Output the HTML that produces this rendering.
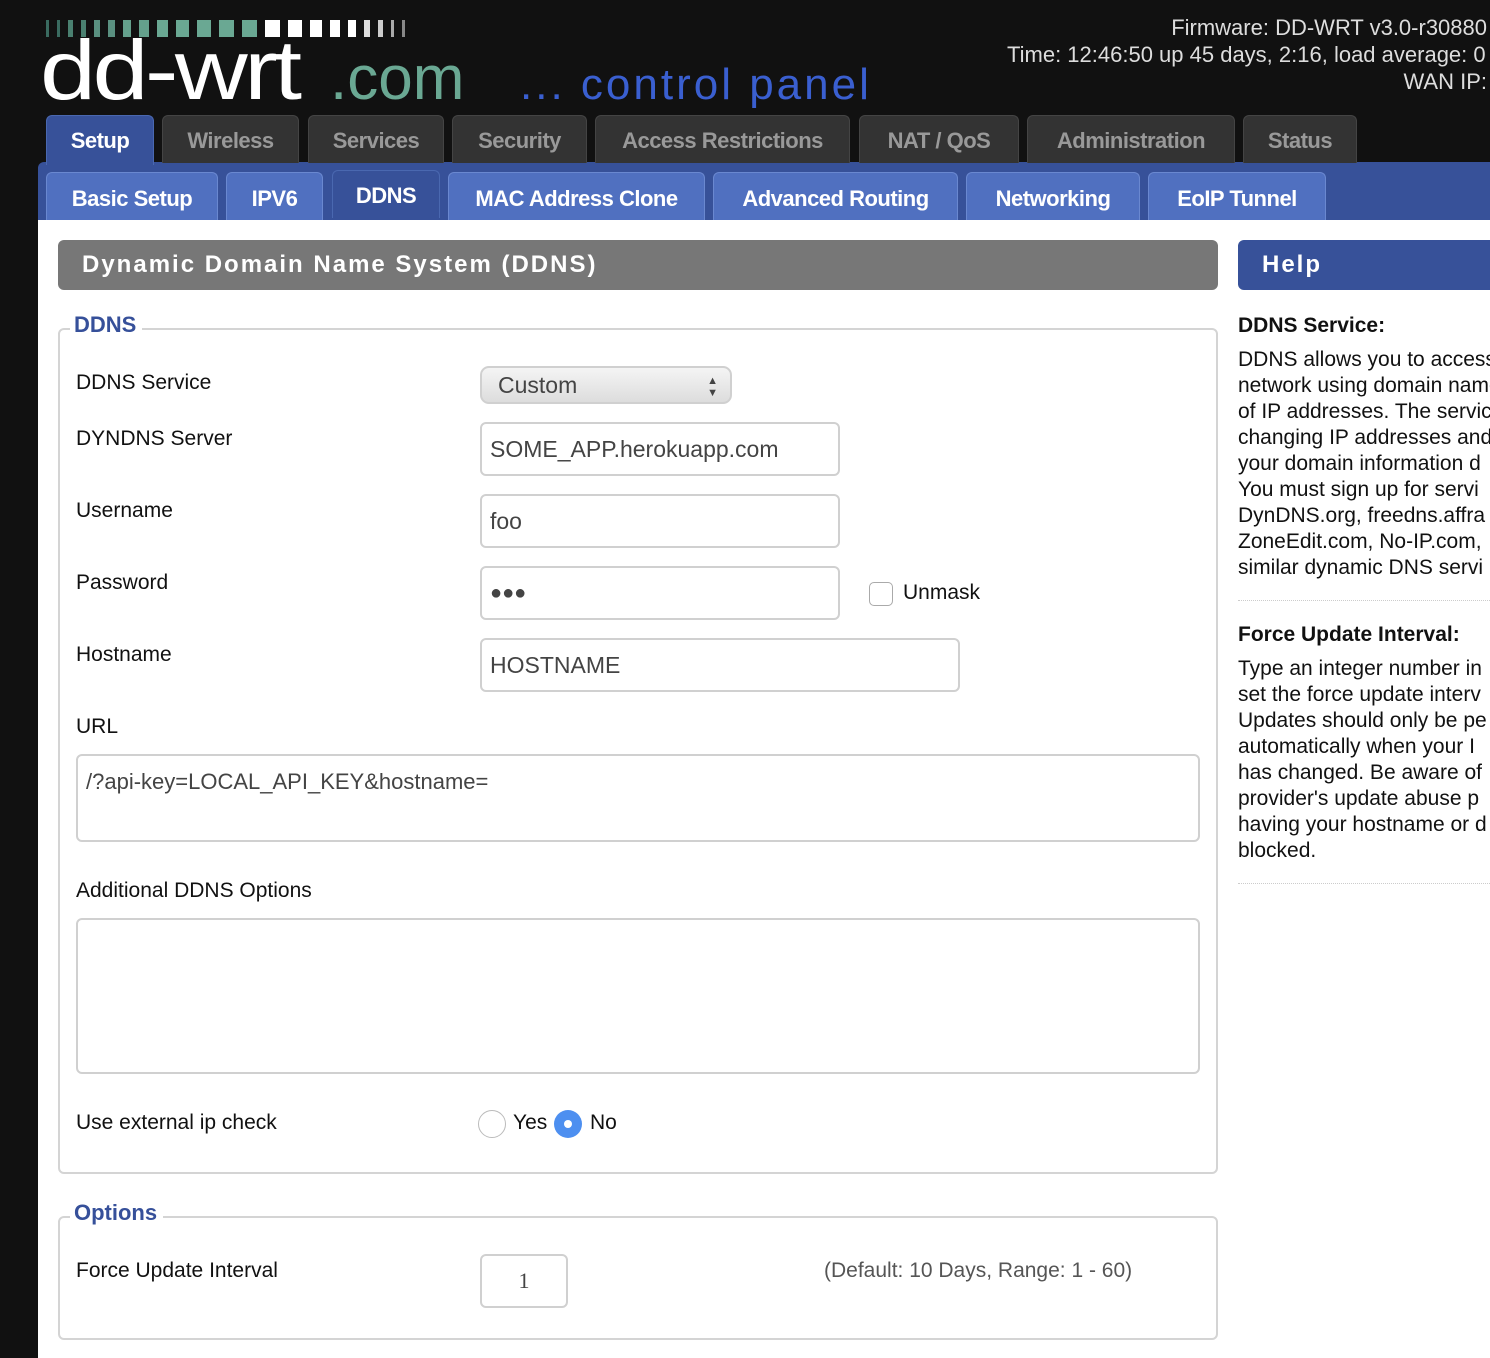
<!DOCTYPE html>
<html><head><meta charset="utf-8"><style>
*{box-sizing:border-box;margin:0;padding:0}
html,body{width:1490px;height:1358px;overflow:hidden;background:#111;font-family:"Liberation Sans",sans-serif}
.a{position:absolute;white-space:nowrap}
.tab{position:absolute;top:115px;height:48px;background:#333;border:1px solid #444;border-bottom:none;border-radius:6px 6px 0 0;color:#999;font-weight:bold;font-size:22px;text-align:center;line-height:50px;letter-spacing:-0.5px}
.sub{position:absolute;top:172px;height:48px;background:#5070c0;border:1px solid #6a88d0;border-bottom:none;border-radius:6px 6px 0 0;color:#fff;font-weight:bold;font-size:22px;text-align:center;line-height:52px;letter-spacing:-0.5px}
.lbl{position:absolute;font-size:21px;color:#111;white-space:nowrap}
.inp{position:absolute;border:2px solid #d0d0d0;border-radius:6px;background:#fff;font-size:23px;color:#444;padding-left:8px;line-height:50px}
.fs{position:absolute;border:2px solid #d4d4d4;border-radius:6px}
.leg{position:absolute;background:#fff;color:#36509a;font-weight:bold;font-size:22px;padding:0 6px 0 4px}
.help{position:absolute;left:1238px;font-size:21px;color:#111;line-height:26px;white-space:nowrap}
.bars span{display:block}
</style></head><body>
<div class="a bars" style="left:46px;top:20px;height:17px;display:flex;gap:8px">
<span style="width:3px;background:#3a6b60"></span><span style="width:3px;background:#3a6b60"></span><span style="width:5px;background:#4a8070"></span><span style="width:5px;background:#4a8070"></span><span style="width:6px;background:#5a9080"></span><span style="width:7px;background:#5a9080"></span><span style="width:8px;background:#64a08c"></span><span style="width:10px;background:#64a08c"></span><span style="width:11px;background:#6aa893"></span><span style="width:13px;background:#6aa893"></span><span style="width:14px;background:#6aa893"></span><span style="width:15px;background:#6aa893"></span><span style="width:15px;background:#6aa893"></span><span style="width:15px;background:#fff"></span><span style="width:14px;background:#fff"></span><span style="width:12px;background:#fff"></span><span style="width:10px;background:#fff"></span><span style="width:8px;background:#fff"></span><span style="width:6px;background:#ddd"></span><span style="width:5px;background:#ccc"></span><span style="width:3px;background:#aaa"></span><span style="width:3px;background:#888"></span>
</div>
<div class="a" style="left:40px;top:28px;font-size:84px;color:#fff;line-height:84px"><span style="display:inline-block;transform:scaleX(1.2);transform-origin:left;letter-spacing:-3px;width:290px">dd-wrt</span><span style="color:#6aa893;font-size:62px">.com</span></div>
<div class="a" style="left:520px;top:60px;font-size:44px;color:#3a5fd0;letter-spacing:3px">... control panel</div>
<div class="a" style="right:3px;top:14px;color:#ddd;font-size:22px;line-height:27px">Firmware: DD-WRT v3.0-r30880</div>
<div class="a" style="left:1007px;top:41px;color:#ddd;font-size:22px;line-height:27px">Time: 12:46:50 up 45 days, 2:16, load average: 0</div>
<div class="a" style="right:3px;top:68px;color:#ddd;font-size:22px;line-height:27px">WAN IP:</div>

<div class="a" style="left:38px;top:162px;width:1452px;height:58px;background:#375199;border-radius:6px 0 0 0"></div>
<div class="tab" style="left:46px;width:108px;background:#375199;border-color:#4a68b0;color:#fff;height:50px;top:115px">Setup</div>
<div class="tab" style="left:162px;width:137px">Wireless</div>
<div class="tab" style="left:308px;width:136px">Services</div>
<div class="tab" style="left:452px;width:135px">Security</div>
<div class="tab" style="left:595px;width:255px">Access Restrictions</div>
<div class="tab" style="left:859px;width:160px">NAT / QoS</div>
<div class="tab" style="left:1027px;width:208px">Administration</div>
<div class="tab" style="left:1243px;width:114px">Status</div>

<div class="sub" style="left:46px;width:172px">Basic Setup</div>
<div class="sub" style="left:226px;width:97px">IPV6</div>
<div class="sub" style="left:332px;width:108px;background:#375199;border-color:#4a68b0;top:170px;line-height:50px">DDNS</div>
<div class="sub" style="left:448px;width:257px">MAC Address Clone</div>
<div class="sub" style="left:713px;width:245px">Advanced Routing</div>
<div class="sub" style="left:966px;width:174px">Networking</div>
<div class="sub" style="left:1148px;width:178px">EoIP Tunnel</div>

<div class="a" style="left:38px;top:220px;width:1452px;height:1138px;background:#fff"></div>
<div class="a" style="left:58px;top:240px;width:1160px;height:50px;background:#777;border-radius:6px;color:#fff;font-weight:bold;font-size:24px;line-height:50px;padding-left:24px;letter-spacing:2px">Dynamic Domain Name System (DDNS)</div>
<div class="a" style="left:1238px;top:240px;width:260px;height:50px;background:#375199;border-radius:6px 0 0 6px;color:#fff;font-weight:bold;font-size:24px;line-height:50px;padding-left:24px;letter-spacing:2px">Help</div>

<div class="fs" style="left:58px;top:328px;width:1160px;height:846px"></div>
<div class="leg" style="left:70px;top:312px">DDNS</div>
<div class="lbl" style="left:76px;top:371px">DDNS Service</div>
<div class="inp" style="left:480px;top:366px;width:252px;height:38px;line-height:34px;border-radius:9px;background:linear-gradient(#f4f4f4,#ddd);padding-left:16px">Custom<span style="position:absolute;right:12px;font-size:11px;line-height:12px;top:7px;color:#444">▲<br>▼</span></div>
<div class="lbl" style="left:76px;top:427px">DYNDNS Server</div>
<div class="inp" style="left:480px;top:422px;width:360px;height:54px">SOME_APP.herokuapp.com</div>
<div class="lbl" style="left:76px;top:499px">Username</div>
<div class="inp" style="left:480px;top:494px;width:360px;height:54px">foo</div>
<div class="lbl" style="left:76px;top:571px">Password</div>
<div class="inp" style="left:480px;top:566px;width:360px;height:54px;font-size:20px">●●●</div>
<div class="a" style="left:869px;top:582px;width:24px;height:24px;border:1.5px solid #aaa;border-radius:5px"></div>
<div class="lbl" style="left:903px;top:581px">Unmask</div>
<div class="lbl" style="left:76px;top:643px">Hostname</div>
<div class="inp" style="left:480px;top:638px;width:480px;height:54px">HOSTNAME</div>
<div class="lbl" style="left:76px;top:715px">URL</div>
<div class="inp" style="left:76px;top:754px;width:1124px;height:88px;line-height:52px;font-size:22px;">/?api-key=LOCAL_API_KEY&amp;hostname=</div>
<div class="lbl" style="left:76px;top:879px">Additional DDNS Options</div>
<div class="inp" style="left:76px;top:918px;width:1124px;height:156px"></div>
<div class="lbl" style="left:76px;top:1111px">Use external ip check</div>
<div class="a" style="left:478px;top:1110px;width:28px;height:28px;border:1.5px solid #bbb;border-radius:50%"></div>
<div class="lbl" style="left:513px;top:1111px">Yes</div>
<div class="a" style="left:554px;top:1110px;width:28px;height:28px;background:#4d8ff0;border-radius:50%"><div style="position:absolute;left:10px;top:10px;width:8px;height:8px;background:#fff;border-radius:50%"></div></div>
<div class="lbl" style="left:590px;top:1111px">No</div>

<div class="fs" style="left:58px;top:1216px;width:1160px;height:124px"></div>
<div class="leg" style="left:70px;top:1200px">Options</div>
<div class="lbl" style="left:76px;top:1259px">Force Update Interval</div>
<div class="inp" style="left:480px;top:1254px;width:88px;height:54px;text-align:center;padding:0;font-family:'Liberation Serif',serif;font-size:22px">1</div>
<div class="lbl" style="left:824px;top:1259px;color:#555">(Default: 10 Days, Range: 1 - 60)</div>

<div class="help" style="top:313px;font-weight:bold">DDNS Service:</div>
<div class="help" style="top:347px">DDNS allows you to access<br>network using domain names<br>of IP addresses. The service<br>changing IP addresses and<br>your domain information d<br>You must sign up for servi<br>DynDNS.org, freedns.affra<br>ZoneEdit.com, No-IP.com,<br>similar dynamic DNS servi</div>
<div class="a" style="left:1238px;top:600px;width:252px;border-top:1px dotted #ccc"></div>
<div class="help" style="top:622px;font-weight:bold">Force Update Interval:</div>
<div class="help" style="top:656px">Type an integer number in<br>set the force update interv<br>Updates should only be pe<br>automatically when your I<br>has changed. Be aware of<br>provider's update abuse p<br>having your hostname or d<br>blocked.</div>
<div class="a" style="left:1238px;top:883px;width:252px;border-top:1px dotted #ccc"></div>
</body></html>
